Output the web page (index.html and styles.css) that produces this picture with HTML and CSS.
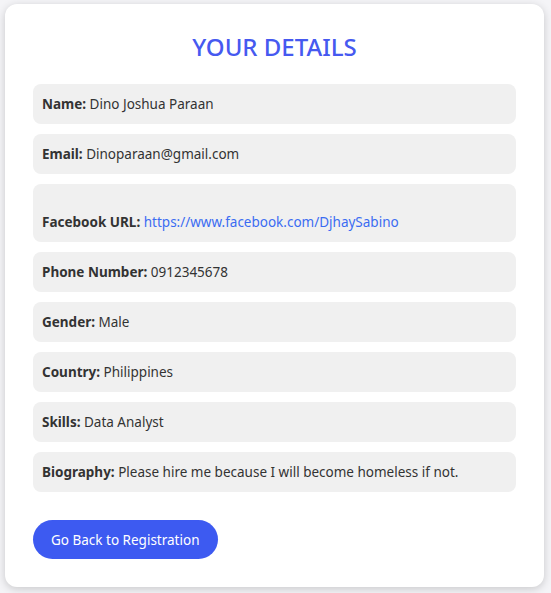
FILE: index.html
```html
<!DOCTYPE html>
<html>
<head>
<meta charset="utf-8">
<link rel="stylesheet" href="styles.css">
</head>
<body>
<div class="card">
  <h2 class="title">YOUR DETAILS</h2>
  <div class="rows">
    <div class="row"><b>Name:</b> Dino Joshua Paraan</div>
    <div class="row"><b>Email:</b> Dinoparaan@gmail.com</div>
    <div class="row row-tall"><span class="blank"></span><b>Facebook URL:</b> <a class="link" href="#">https://www.facebook.com/DjhaySabino</a></div>
    <div class="row"><b>Phone Number:</b> 0912345678</div>
    <div class="row"><b>Gender:</b> Male</div>
    <div class="row"><b>Country:</b> Philippines</div>
    <div class="row"><b>Skills:</b> Data Analyst</div>
    <div class="row"><b>Biography:</b> Please hire me because I will become homeless if not.</div>
  </div>
  <button class="btn">Go Back to Registration</button>
</div>
</body>
</html>
```

FILE: styles.css
```css
html, body {
  margin: 0;
  padding: 0;
}
body {
  background: #f4f4f7;
  font-family: "Noto Sans", "Open Sans", sans-serif;
  color: #333;
  padding: 4px 7px 6px 5px;
}
.card {
  background: #ffffff;
  border-radius: 12px;
  box-shadow: 0 2px 8px rgba(0, 0, 0, 0.18);
  padding: 28px;
  display: flex;
  flex-direction: column;
  align-items: flex-start;
}
.title {
  align-self: stretch;
  text-align: center;
  margin: 0 0 22px 0;
  font-size: 24px;
  line-height: 30px;
  font-weight: 500;
  color: #4659f0;
}
.rows {
  align-self: stretch;
  display: flex;
  flex-direction: column;
  gap: 10px;
}
.row {
  background: #f0f0f0;
  border-radius: 8px;
  padding: 10px 9px 10px 9px;
  font-size: 13.5px;
  line-height: 20px;
  color: #333;
}
.row b {
  font-weight: 700;
}
.blank {
  display: block;
  height: 18px;
}
.link {
  color: #3b6cf2;
  text-decoration: none;
}
.btn {
  margin-top: 28px;
  background: #3d5af1;
  color: #fff;
  border: none;
  border-radius: 20px;
  height: 39px;
  padding: 0 18px;
  font-family: inherit;
  font-size: 13.5px;
}
```
